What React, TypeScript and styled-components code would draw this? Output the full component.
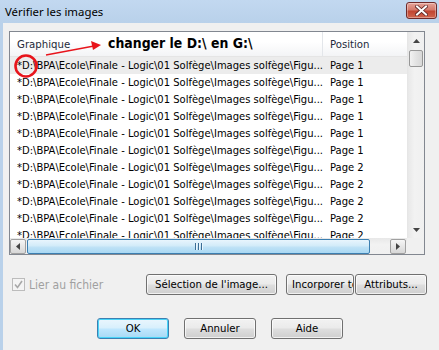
import React from "react";
import styled, { createGlobalStyle } from "styled-components";

const Global = createGlobalStyle`
  html, body { margin: 0; padding: 0; background: #f0f0f0; }
  * { box-sizing: border-box; }
`;

const UI = `"DejaVu Sans Condensed", "DejaVu Sans", sans-serif`;

const Window = styled.div`
  width: 439px;
  height: 350px;
  display: flex;
  flex-direction: column;
  background: #f0f0f0;
  overflow: hidden;
  font-family: ${UI};
  font-stretch: semi-condensed;
  font-size: 11.3px;
  color: #000;
`;

const TitleBar = styled.div`
  height: 23px;
  flex: none;
  display: flex;
  align-items: center;
  justify-content: space-between;
  padding: 0 2px 0 5px;
  background: linear-gradient(#c2d8f0, #b9d1ea);
`;

const Title = styled.span`
  font-family: "Noto Sans", "Open Sans", sans-serif;
  font-size: 11.4px;
  color: #000;
  margin-top: -1px;
`;

const CloseBtn = styled.div`
  width: 31px;
  height: 17px;
  margin-top: -2px;
  border: 1px solid #6e2a2a;
  border-radius: 3px;
  background: linear-gradient(#e6a49a 0%, #d47a6c 45%, #c14632 55%, #d0654e 100%);
  box-shadow: inset 0 0 0 1px rgba(255, 255, 255, 0.35);
  display: flex;
  align-items: center;
  justify-content: center;
`;

const Body = styled.div`
  flex: 1;
  display: flex;
  flex-direction: column;
  border-left: 3px solid #b9d1ea;
  padding: 8px 0 0 6px;
`;

const ListBox = styled.div`
  position: relative;
  width: 416px;
  height: 224px;
  border: 1px solid #828790;
  background: #fff;
  display: grid;
  grid-template-columns: 397px 17px;
  grid-template-rows: 206px 16px;
`;

const ListArea = styled.div`
  overflow: hidden;
  display: flex;
  flex-direction: column;
`;

const Header = styled.div`
  height: 25px;
  flex: none;
  display: grid;
  grid-template-columns: 313px 1fr;
  background: linear-gradient(#ffffff 0%, #ffffff 40%, #f3f4f6 100%);
  border-bottom: 1px solid #e5e5e5;
`;

const HeadCell = styled.div<{ $sep?: boolean }>`
  display: flex;
  align-items: center;
  padding-left: 7px;
  padding-top: 1px;
  color: #1e2a3a;
  border-right: ${(p) => (p.$sep ? "1px solid #e3e6ea" : "none")};
`;

const Row = styled.div<{ $sel?: boolean }>`
  height: 17px;
  flex: none;
  display: grid;
  grid-template-columns: 313px 1fr;
  align-items: center;
  font-size: 11.1px;
  background: ${(p) => (p.$sel ? "#ececec" : "transparent")};
`;

const Cell = styled.div`
  padding-left: 7px;
  white-space: nowrap;
  overflow: hidden;
`;

const VScroll = styled.div`
  display: flex;
  flex-direction: column;
  background: linear-gradient(90deg, #e8e8e8, #f2f2f2 40%, #f0f0f0);
  border-left: 1px solid #e6e6e6;
`;

const ArrowBtn = styled.div`
  width: 17px;
  height: 17px;
  flex: none;
  display: flex;
  align-items: center;
  justify-content: center;
`;

const VThumb = styled.div`
  height: 17px;
  margin: 1px 1px 0 1px;
  border: 1px solid #979797;
  border-radius: 2px;
  background: linear-gradient(90deg, #f2f2f2, #e3e3e3 50%, #d8d8d8);
`;

const Spacer = styled.div`
  flex: 1;
`;

const HScroll = styled.div`
  display: flex;
  align-items: stretch;
  background: linear-gradient(#e8e8e8, #f2f2f2 40%, #f0f0f0);
  padding: 0 1px 0 0;
`;

const HArrow = styled.div`
  width: 16px;
  height: 15px;
  margin-top: 1px;
  flex: none;
  display: flex;
  align-items: center;
  justify-content: center;
  border: 1px solid #a0a0a0;
  border-radius: 2px;
  background: linear-gradient(#f6f6f6, #e6e6e6 50%, #d7d7d7);
`;

const HThumb = styled.div`
  width: 343px;
  height: 15px;
  margin: 1px 0 0 1px;
  border: 1px solid #3c7fb1;
  border-radius: 2px;
  background: linear-gradient(#e8f5fd, #d2ebf9 45%, #bfe2f6 55%, #a9d8f3);
  display: flex;
  align-items: center;
  justify-content: center;
  gap: 2px;
`;

const Grip = styled.span`
  width: 1px;
  height: 7px;
  background: #3b6d95;
  box-shadow: 1px 0 0 #eaf6fd;
`;

const Corner = styled.div`
  background: #f0f0f0;
`;

const Note = styled.span`
  position: absolute;
  left: 98px;
  top: 3px;
  font-family: "DejaVu Sans Condensed", "DejaVu Sans", sans-serif;
  font-stretch: semi-condensed;
  font-weight: bold;
  font-size: 13.9px;
  color: #000;
  white-space: nowrap;
`;

const Overlay = styled.svg`
  position: absolute;
  left: 0;
  top: 0;
  pointer-events: none;
`;

const Controls = styled.div`
  display: flex;
  align-items: center;
  margin-top: 19px;
  height: 21px;
`;

const CheckWrap = styled.label`
  display: flex;
  align-items: center;
  gap: 4px;
  color: #a0a0a0;
  margin-left: 3px;
  width: 134px;
  flex: none;
  font-size: 12px;
`;

const CheckBox = styled.span`
  width: 13px;
  height: 13px;
  border: 1px solid #bcbcbc;
  background: #f4f4f4;
  display: flex;
  align-items: center;
  justify-content: center;
`;

const Button = styled.div<{ $w: number; $def?: boolean; $ml?: number; $clip?: boolean }>`
  width: ${(p) => p.$w}px;
  height: 21px;
  margin-left: ${(p) => p.$ml ?? 0}px;
  border: 1px solid ${(p) => (p.$def ? "#3c7fb1" : "#707070")};
  border-radius: 3px;
  background: ${(p) =>
    p.$def
      ? "linear-gradient(#eaf6fd, #d9f0fc 45%, #bee6fd 55%, #a7d9f5)"
      : "linear-gradient(#f2f2f2, #ebebeb 45%, #dddddd 55%, #cfcfcf)"};
  box-shadow: inset 0 0 0 1px ${(p) => (p.$def ? "#48d4f8" : "rgba(255,255,255,0.7)")};
  display: flex;
  align-items: center;
  justify-content: ${(p) => (p.$clip ? "flex-start" : "center")};
  padding-left: ${(p) => (p.$clip ? "5px" : "0")};
  white-space: nowrap;
  overflow: hidden;
  flex: none;
`;

const BottomRow = styled.div`
  display: flex;
  margin-top: 23px;
  margin-left: 88px;
  gap: 15px;
`;

const PATH = "*D:\\BPA\\Ecole\\Finale - Logic\\01 Solfège\\Images solfège\\Figu...";
const pages = ["Page 1", "Page 1", "Page 1", "Page 1", "Page 1", "Page 1", "Page 2", "Page 2", "Page 2", "Page 2", "Page 2"];

export default function App() {
  return (
    <>
      <Global />
      <Window>
        <TitleBar>
          <Title>Vérifier les images</Title>
          <CloseBtn>
            <svg width="13" height="11" viewBox="0 0 13 11">
              <path d="M2 1.5 L11 9.5 M11 1.5 L2 9.5" stroke="#5a2323" strokeWidth="3.6" strokeLinecap="square" />
              <path d="M2 1.5 L11 9.5 M11 1.5 L2 9.5" stroke="#fff" strokeWidth="2" strokeLinecap="square" />
            </svg>
          </CloseBtn>
        </TitleBar>
        <Body>
          <ListBox>
            <ListArea>
              <Header>
                <HeadCell $sep>Graphique</HeadCell>
                <HeadCell>Position</HeadCell>
              </Header>
              {pages.map((p, i) => (
                <Row key={i} $sel={i === 0}>
                  <Cell>{PATH}</Cell>
                  <Cell>{p}</Cell>
                </Row>
              ))}
            </ListArea>
            <VScroll>
              <ArrowBtn>
                <svg width="7" height="4" viewBox="0 0 7 4">
                  <path d="M0 4 L3.5 0 L7 4 Z" fill="#444" />
                </svg>
              </ArrowBtn>
              <VThumb />
              <Spacer />
              <ArrowBtn>
                <svg width="7" height="4" viewBox="0 0 7 4">
                  <path d="M0 0 L7 0 L3.5 4 Z" fill="#444" />
                </svg>
              </ArrowBtn>
            </VScroll>
            <HScroll>
              <HArrow>
                <svg width="4" height="7" viewBox="0 0 4 7">
                  <path d="M4 0 L4 7 L0 3.5 Z" fill="#444" />
                </svg>
              </HArrow>
              <HThumb>
                <Grip />
                <Grip />
                <Grip />
              </HThumb>
              <Spacer />
              <HArrow>
                <svg width="4" height="7" viewBox="0 0 4 7">
                  <path d="M0 0 L4 3.5 L0 7 Z" fill="#444" />
                </svg>
              </HArrow>
            </HScroll>
            <Corner />
            <Note>changer le D:\ en G:\</Note>
            <Overlay width="120" height="60" viewBox="0 0 120 60">
              <path d="M36 23 L84 14" stroke="#e8141b" strokeWidth="1.4" fill="none" />
              <path d="M91 13 L81 9 L83 18 Z" fill="#e8141b" />
              <circle cx="16" cy="34" r="10.5" stroke="#e8141b" strokeWidth="2.6" fill="none" />
            </Overlay>
          </ListBox>
          <Controls>
            <CheckWrap>
              <CheckBox>
                <svg width="9" height="9" viewBox="0 0 9 9">
                  <path d="M1 4.5 L3.5 7.5 L8 1" stroke="#a8a8a8" strokeWidth="1.6" fill="none" />
                </svg>
              </CheckBox>
              Lier au fichier
            </CheckWrap>
            <Button $w={131}>Sélection de l'image...</Button>
            <Button $w={68} $ml={9} $clip>
              Incorporer tout
            </Button>
            <Button $w={72} $ml={1}>
              Attributs...
            </Button>
          </Controls>
          <BottomRow>
            <Button $w={72} $def>
              OK
            </Button>
            <Button $w={72}>Annuler</Button>
            <Button $w={72}>Aide</Button>
          </BottomRow>
        </Body>
      </Window>
    </>
  );
}
